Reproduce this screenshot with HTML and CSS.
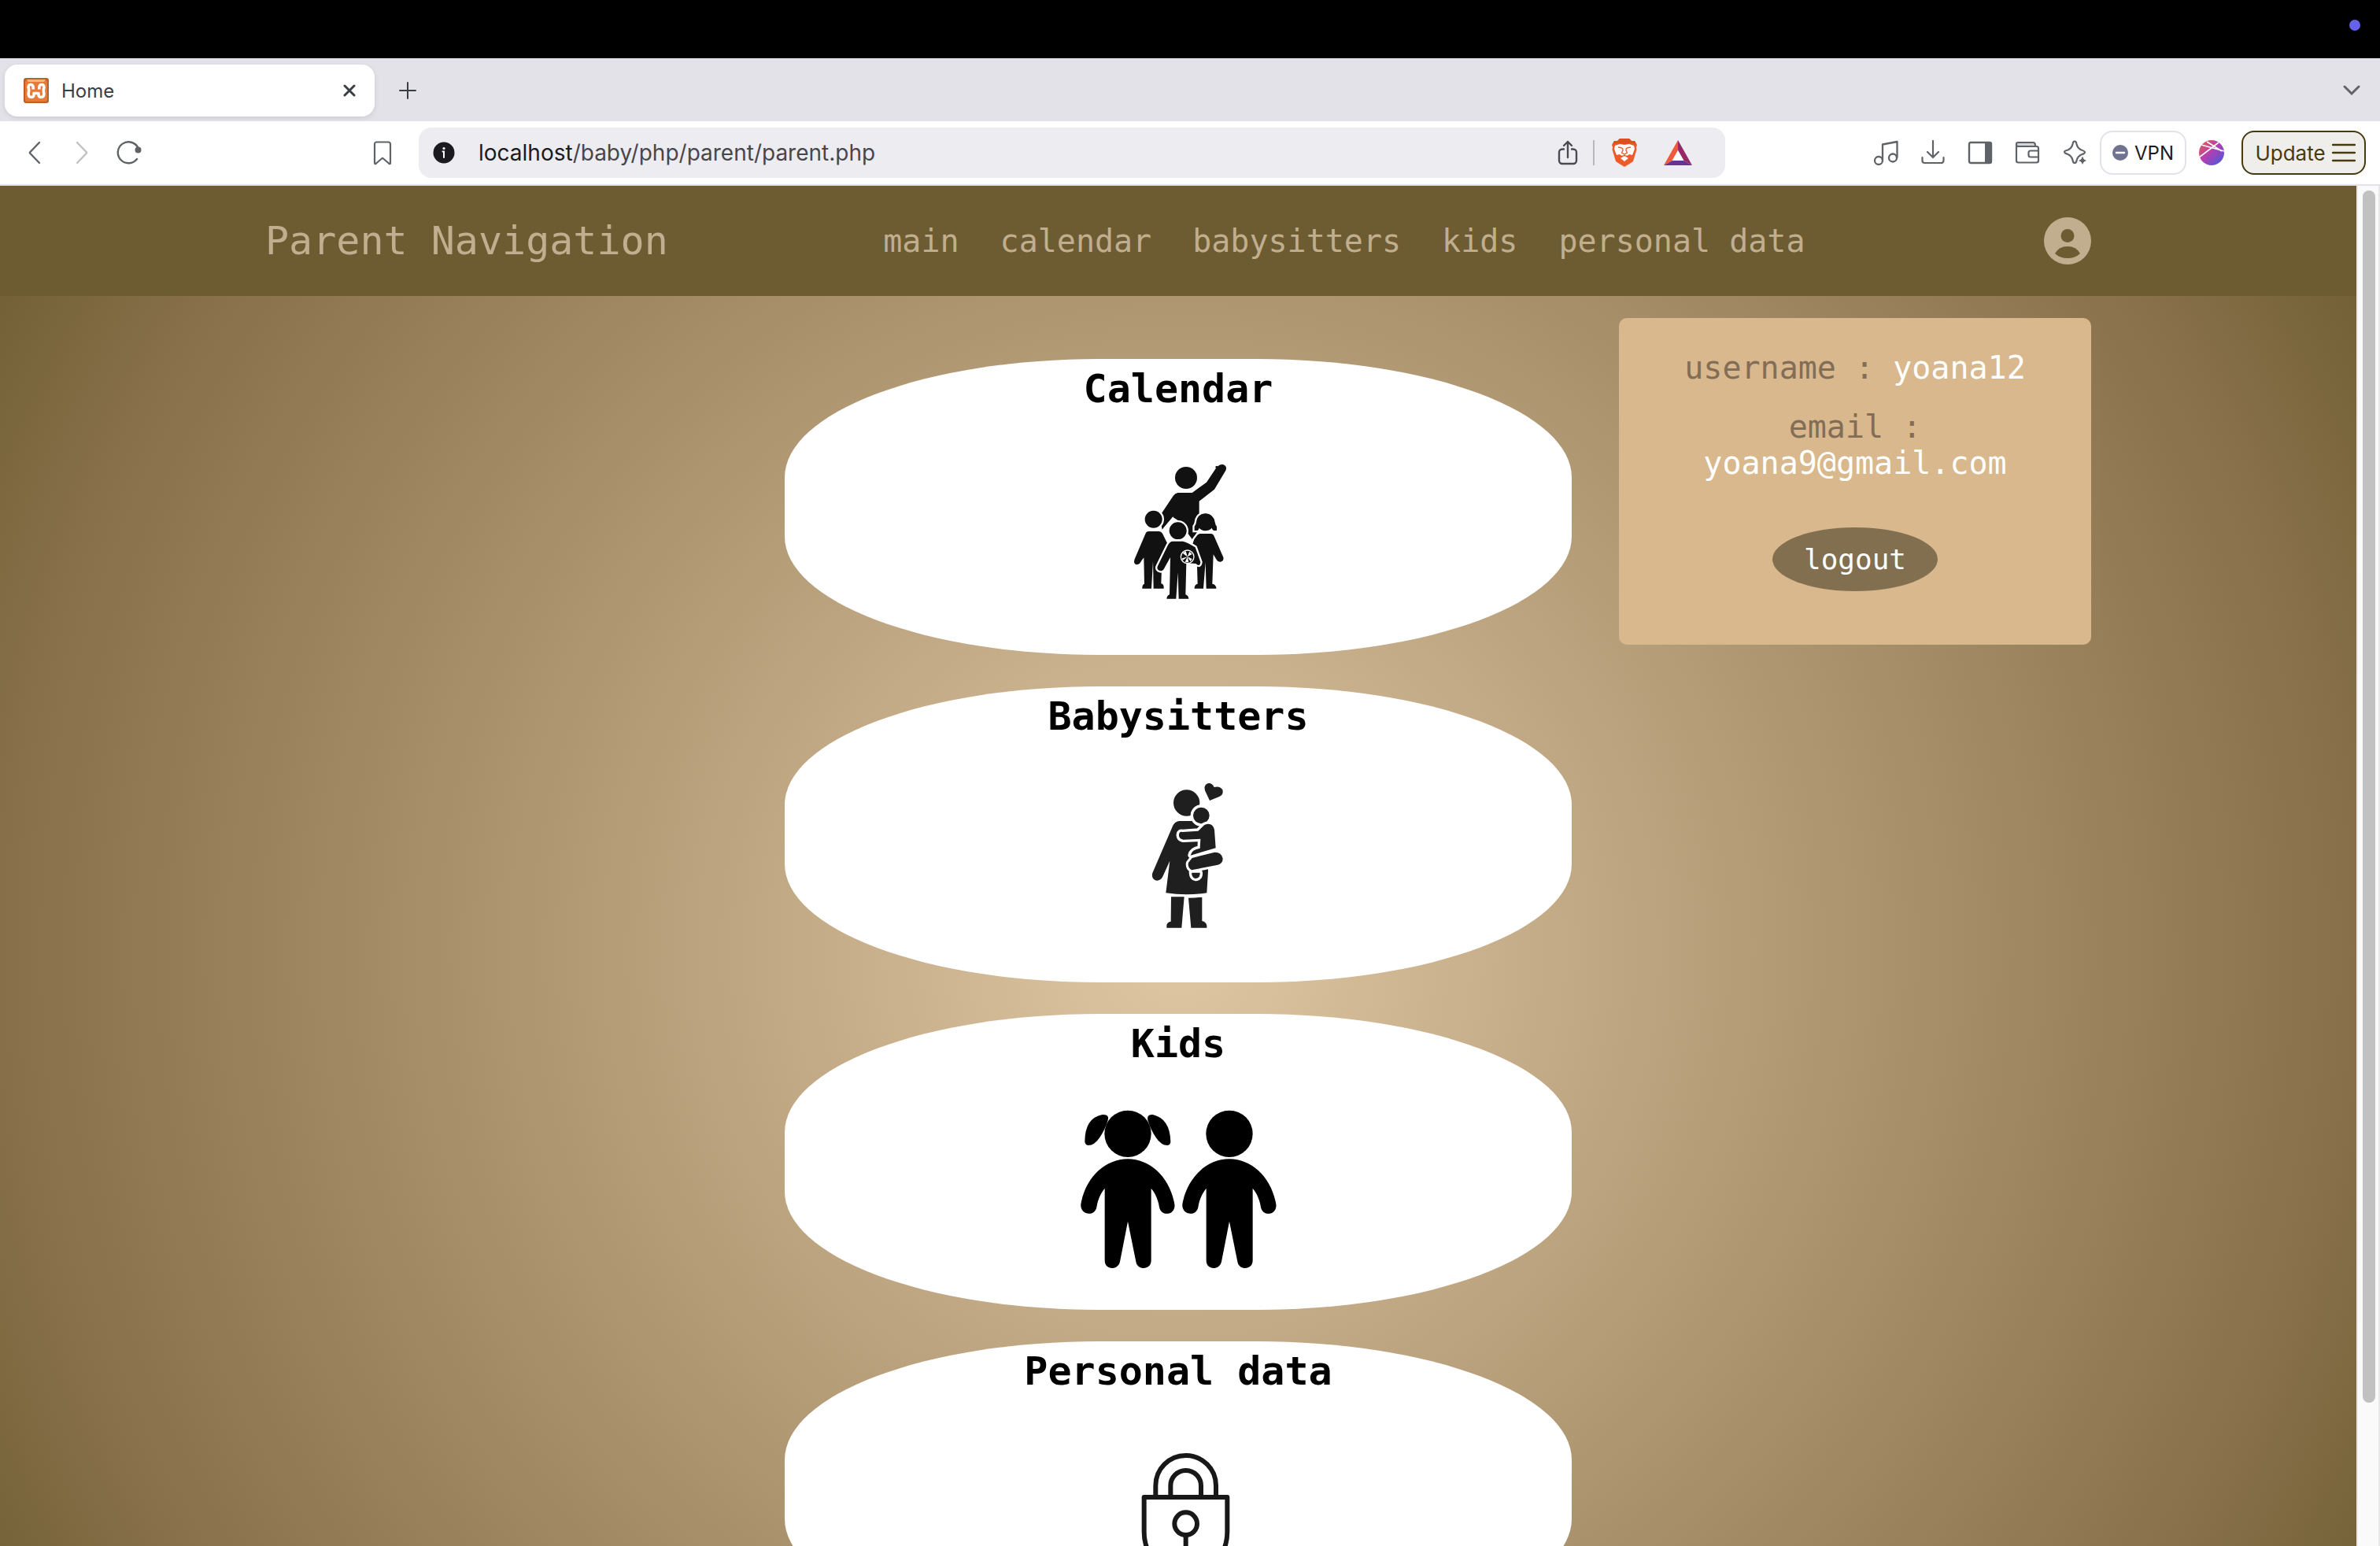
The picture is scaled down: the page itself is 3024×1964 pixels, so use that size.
FILE: index.html
```html
<!DOCTYPE html>
<html lang="en">
<head>
<meta charset="utf-8">
<title>Home</title>
<link rel="stylesheet" href="styles.css">
</head>
<body>
<div class="screen">
  <div class="menubar"><span class="status-dot"></span></div>

  <div class="tabstrip">
    <div class="tab">
      <svg class="icon" viewBox="0 0 32 32"><rect width="32" height="32" rx="3" fill="#b9602b"/><rect x="2" y="3" width="28" height="27" rx="2" fill="#e87a38"/><path d="M4 2h24l-2 3H6z" fill="#efb48c"/><path d="M12 14.500q1-6-3-6t-2.500 5.500q.500 2 0 3.500-1.500 7 3.500 7 3.500 0 3-5h6q-.500 5 3 5 5 0 3.500-7-.500-1.500 0-3.500 1.500-5.500-2.500-5.500t-3 6" fill="none" stroke="#fff" stroke-width="3.600" stroke-linejoin="round"/></svg>
      <span class="tab-title">Home</span>
      <button class="tab-close" aria-label="Close tab"><svg viewBox="0 0 16 16" width="16" height="16"><path d="M2 2l12 12M14 2L2 14" stroke="#3b3e43" stroke-width="3" stroke-linecap="round"/></svg></button>
    </div>
    <button class="tab-new" aria-label="New tab"><svg viewBox="0 0 22 22" width="22" height="22"><path d="M11 1v20M1 11h20" stroke="#3b3e43" stroke-width="2" stroke-linecap="round"/></svg></button>
    <button class="tab-list" aria-label="Search tabs"><svg viewBox="0 0 22 14" width="22" height="14"><path d="M2 2l9 9 9-9" fill="none" stroke="#606367" stroke-width="3" stroke-linecap="round"/></svg></button>
  </div>

  <div class="toolbar">
    <button aria-label="Back"><svg class="icon" viewBox="0 0 32 32"><path d="M22 3L10 15.500Q9.500 16 10 16.500L22 29" fill="none" stroke="#5f6368" stroke-width="2.400" stroke-linecap="round"/></svg></button>
    <button aria-label="Forward"><svg class="icon" viewBox="0 0 32 32"><path d="M10 3L22 15.500Q22.500 16 22 16.500L10 29" fill="none" stroke="#bfc1c3" stroke-width="2.400" stroke-linecap="round"/></svg></button>
    <button aria-label="Reload"><svg class="icon" viewBox="0 0 32 32"><path d="M26 24A13.500 13.500 0 1 1 27.500 10" fill="none" stroke="#5f6368" stroke-width="2.400" stroke-linecap="round"/><circle cx="27.500" cy="12.500" r="4" fill="#5f6368"/></svg></button>
    <button class="bookmark" aria-label="Bookmark"><svg class="icon" viewBox="0 0 32 32"><path d="M8.500 2.500h15a2.500 2.500 0 0 1 2.500 2.500v24q0 2-2 .500l-7-6q-1-1-2 0l-7 6q-2 1.500-2-.500V5a2.500 2.500 0 0 1 2.500-2.500z" fill="none" stroke="#5f6368" stroke-width="2.200"/></svg></button>
    <div class="omnibox">
      <svg class="site-info" viewBox="0 0 28 28"><circle cx="14" cy="14" r="13.500" fill="#1b1a1f"/><circle cx="14" cy="8.500" r="1.600" fill="#fff"/><path d="M12.500 12.500H14V20" fill="none" stroke="#fff" stroke-width="2" stroke-linecap="round"/></svg>
      <span class="url"><span class="host">localhost</span>/baby/php/parent/parent.php</span>
      <svg class="icon" viewBox="0 0 32 32"><path d="M11 11.500H9A4 4 0 0 0 5 15.500V26a4 4 0 0 0 4 4h14a4 4 0 0 0 4-4V15.500A4 4 0 0 0 23 11.500H21M16 22V2M11 7l5-5 5 5" fill="none" stroke="#4a4a50" stroke-width="2.400" stroke-linecap="round" stroke-linejoin="round"/></svg>
      <span class="omni-divider"></span>
      <svg class="brave" viewBox="0 0 32 36"><path d="M10 0h12l3 3 4 0 3 5-1 3 .500 3-4.500 15-6 4-5 3-5-3-6-4L.500 14 1 11 0 8l3-5 4 0z" fill="#ee5b2a"/><path d="M10 0h12l3 3 4 0 2 4-7-1-8 1-8-1-7 1 2-4 4 0z" fill="#de4f20"/><path d="M4 9l6-2 6 1 6-1 6 2 1 4-3 8-4-1-4 3h-4l-4-3-4 1-3-8z" fill="#fff"/><path d="M16 22l5 3-5 4-5-4z" fill="#fff"/><path d="M8 11l5 1M24 11l-5 1M13.500 12l.500 3-1.500 3 3.500 2 3.500-2-1.500-3 .500-3M16 20v2.500M11 23l5-1.500 5 1.500" fill="none" stroke="#ee5b2a" stroke-width="1.400"/></svg>
      <svg class="bat" viewBox="0 0 36 32"><path d="M18 0L0 32l11-6 7-13z" fill="#f15a38"/><path d="M18 0l18 32-11-6-7-13z" fill="#942965"/><path d="M0 32h36l-11-6H11z" fill="#653394"/><path d="M18 13l7.500 13h-15z" fill="#fff"/></svg>
    </div>
    <div class="tools">
      <button aria-label="Media"><svg class="icon" viewBox="0 0 32 32"><g fill="none" stroke="#5f6368" stroke-width="2.300"><circle cx="7" cy="26" r="5"/><circle cx="25" cy="22.500" r="5"/><path d="M12 26V5.500L30.500 2v20.500" stroke-linejoin="round"/></g></svg></button>
      <button aria-label="Downloads"><svg class="icon" viewBox="0 0 32 32"><path d="M16 1v20M9 15l7 7 7-7M2.500 22v4a3 3 0 0 0 3 3h21a3 3 0 0 0 3-3v-4" fill="none" stroke="#5f6368" stroke-width="2.200" stroke-linecap="round"/></svg></button>
      <button aria-label="Sidebar"><svg class="icon" viewBox="0 0 32 32"><rect x="2" y="3" width="28" height="26" rx="2" fill="none" stroke="#5f6368" stroke-width="2.400"/><path d="M22 3h8v26h-8z" fill="#5f6368"/></svg></button>
      <button aria-label="Wallet"><svg class="icon" viewBox="0 0 32 32"><path d="M3 4h20q3 0 3 4H3z" fill="#d5d6d8"/><path d="M2 5q0-2 2-2h19q3 0 3 4M2 5v21q0 2.500 2.500 2.500h23q2.500 0 2.500-2.500V10.500Q30 8 27.500 8H4.500Q2 8 2 6M30 13.500H20q-2.500 0-2.500 2.500v3q0 2.500 2.500 2.500h10" fill="none" stroke="#5f6368" stroke-width="2.200"/></svg></button>
      <button aria-label="Leo"><svg class="icon" viewBox="0 0 32 32"><path d="M16 1.500q2 0 2.500 3.500 1 5 6 7.500 4.500 1.500 4.500 3t-4.500 3q-5 2.500-6 7.500Q18 29 16 29t-2.500-3.500q-1-5-6-7.500Q3 16.500 3 15t4.500-2.500q5-2.500 6-7.500 .500-3.500 2.500-3.500z" fill="none" stroke="#5f6368" stroke-width="2.200"/><path d="M26 19l2 5 4 2-4 2-2 4-2-4-4-2 4-2z" fill="#5f6368" stroke="#fff" stroke-width="1"/></svg></button>
    </div>
    <button class="vpn"><svg viewBox="0 0 20 20" width="20" height="20"><circle cx="10" cy="10" r="10" fill="#70738f"/><path d="M5 10h10" stroke="#fff" stroke-width="2.500" stroke-linecap="round"/></svg>VPN</button>
    <button class="profile" aria-label="Profile"><svg class="icon" viewBox="0 0 32 32"><defs><linearGradient id="ball" x1="0" y1="0" x2="1" y2="1"><stop offset="0" stop-color="#f06040"/><stop offset=".450" stop-color="#b63fb0"/><stop offset="1" stop-color="#3f5be0"/></linearGradient><clipPath id="round"><circle cx="16" cy="16" r="16"/></clipPath></defs><circle cx="16" cy="16" r="16" fill="url(#ball)"/><path clip-path="url(#round)" d="M0 22L25 3M3 6l29 8M10 2l19 12" stroke="#fff" stroke-width="1.600"/></svg></button>
    <button class="update">Update<svg viewBox="0 0 30 24" width="30" height="24"><path d="M1 2h28M1 12h28M1 22h28" stroke="#473a0e" stroke-width="2.400" stroke-linecap="round"/></svg></button>
  </div>

  <div class="viewport">
    <div class="page">
      <header class="site-header">
        <div class="site-nav">
          <span class="brand">Parent Navigation</span>
          <nav class="links">
            <a href="#main">main</a>
            <a href="#calendar">calendar</a>
            <a href="#babysitters">babysitters</a>
            <a href="#kids">kids</a>
            <a href="#personal">personal data</a>
          </nav>
          <button class="account" aria-label="Account"><svg viewBox="0 0 60 60" width="60" height="60"><circle cx="30" cy="30" r="30" fill="#c0ae8f"/><circle cx="30" cy="23.500" r="8.500" fill="#6d5c31"/><path d="M14 46q5-9 16-9t16 9q-6 6-16 6t-16-6z" fill="#6d5c31"/></svg></button>
          <section class="account-panel">
            <p>username : <span>yoana12</span></p>
            <p>email : <span>yoana9@gmail.com</span></p>
            <button class="logout">logout</button>
          </section>
        </div>
      </header>

      <main class="cards">
        <a class="card" href="#calendar">
          <h2>Calendar</h2>
          <svg viewBox="-159 -12 900 720" fill="#111">
            <circle cx="321" cy="141" r="42"/>
            <path d="M290 198h54l55-40 36-54q-4-4 0-8l7 1q14-12 26-4 10 8 4 20l-43 72-58 45v90l-20 64-60-80-21-14-40 48-10-50 52-78q7-10 18-12z"/>
            <path d="M273 288l-38 44 30-2z" fill="#fff"/>
            <g stroke="#fff" stroke-width="14" paint-order="stroke">
              <circle cx="197" cy="299" r="33"/>
              <path d="M395 278q31 0 36 32 2 12 7 16v16h-12q-6-4-7-10l-48 0q-1 6-6 10h-12v-16q6-6 7-16 3-32 35-32z"/>
              <path d="M178 345h40q8 0 13 8l39 80q6 18-10 24-12 4-20-8l-10-20-4 115q10 2 10 14v5h-39l-2-105-6 105h-35v-5q2-12 8-13l-2-100-9 12q-8 18-22 14-10-6-4-20l41-96q4-10 12-10z" stroke="none"/>
              <path d="M375 354h40q9 0 13 10l35 80q3 14-10 17-10 2-16-8l-12-20-4 112q12 2 15 14v4h-38l-3-100-8 100h-34v-4q2-12 12-14l-3-100-30-10 20-60 12-16q5-5 11-5z"/>
              <circle cx="290" cy="343" r="33"/>
              <path d="M270 383h38q15 2 48 23l20 56q-2 20-18 6l-36-2-3 120q11 4 12 16h-38l-3-100-7 100h-36q1-12 11-16l3-142-22 40q-8 18-23 9-8-6-3-16l38-78q8-16 20-16z"/>
            </g>
            <circle cx="395" cy="310" r="33"/>
            <circle cx="326" cy="442" r="25" stroke="#fff" stroke-width="4"/>
            <path d="M326 442l-18-14 12-8zM326 442l8-20 10 10zM326 442l18 8-6 10zM326 442l5 21h-14zM326 442l-20 6 2 8z" fill="#fff"/>
          </svg>
        </a>
        <a class="card" href="#babysitters">
          <h2>Babysitters</h2>
          <svg viewBox="-219 -24 900 720" fill="#1f1f1f">
            <circle cx="263" cy="120" r="50"/>
            <path d="M351 111l-18-38q-6-20 10-27 16-4 25 14 22-6 32 10 6 18-14 27z"/>
            <path d="M235 189h50l60 20 0 170-5 84q-78 12-156 0l15-122-28 62q-12 18-29 11-14-8-9-27l75-174q8-22 27-24z"/>
            <path d="M204 478h50l-10 118h-57v-10q2-12 16-14zM270 482q26 0 52-3v91q16 4 18 18v8h-60z"/>
            <g stroke="#fff" stroke-width="20" paint-order="stroke" stroke-linejoin="round">
              <path d="M282 386h32q2 18-16 22-15-2-16-22z"/>
              <circle cx="319" cy="168" r="31"/>
              <path d="M331 204q30-12 38 18l5 70-96 28q4-22 36-27l2-36-66 3q-18-4-16-20 2-12 13-9l60-4z"/>
            </g>
            <path d="M284 330l86-22q27 0 31 24 0 18-19 24l-100 20q-16-10-12-28z" stroke="#fff" stroke-width="18" paint-order="stroke" stroke-linejoin="round"/>
          </svg>
        </a>
        <a class="card" href="#kids">
          <h2>Kids</h2>
          <svg viewBox="-9 -6 900 720">
            <defs><g id="child"><circle cx="249" cy="151" r="89"/><path d="M249 247c85 0 160 70 178 172 6 42-50 50-58 12q-7-44-31-72v275c0 38-53 38-58 4L249 485l-30 153c-7 34-58 34-58-4V359q-24 28-31 72c-8 38-64 30-60-12C88 317 163 247 249 247z"/></g></defs>
            <use href="#child"/>
            <use href="#child" x="387"/>
            <path d="M152 78q28-2 21 22-10 34-31 65-20 30-44 30-12-2-13-14 0-90 67-103zM344 78q-24-2-19 22 10 34 31 65 20 30 44 30 12-2 12-14-2-88-68-103z"/>
          </svg>
        </a>
        <a class="card" href="#personal">
          <h2>Personal data</h2>
          <svg viewBox="-159 -48 900 720" fill="none" stroke="#181818" stroke-width="18">
            <path d="M205 240v-38a115 115 0 0 1 230 0v38M262 240v-38a58 58 0 0 1 116 0v38M161 246h317v132q0 130-158 166-159-36-159-166z" stroke-linejoin="round"/>
            <circle cx="320" cy="347" r="43"/><path d="M320 390v70"/>
          </svg>
        </a>
      </main>
    </div>
    <div class="scrollbar"><div class="thumb"></div></div>
  </div>
</div>
</body>
</html>
```
FILE: styles.css
```css
* { box-sizing: border-box; }
body { margin: 0; font-family: Inter, sans-serif; }
button { padding: 0; border: 0; background: none; font: inherit; color: inherit; display: flex; align-items: center; }
a { color: inherit; text-decoration: none; }
svg { display: block; flex: none; }
.icon { width: 32px; height: 32px; }

.screen { height: 100vh; display: flex; flex-direction: column; overflow: hidden; }

.menubar { flex: none; height: 74px; background: #000; display: flex; justify-content: flex-end; align-items: flex-start; padding: 25px; }
.status-dot { width: 14px; height: 14px; border-radius: 50%; background: #6561ea; }

.tabstrip { flex: none; height: 80px; background: #e3e2e8; display: flex; align-items: center; padding: 2px 25px 0 6px; }
.tab { width: 470px; height: 66px; border-radius: 16px; background: #fff; box-shadow: 0 2px 6px #0000001a; display: flex; align-items: center; padding: 0 24px; }
.tab-title { flex: 1; padding-left: 16px; font-size: 24px; color: #3b3e43; }
.tab-new { margin-left: 31px; }
.tab-list { margin-left: auto; }

.toolbar { flex: none; height: 82px; background: #fff; border-bottom: 2px solid #e3e2e8; display: flex; align-items: center; padding: 0 18px 0 28px; }
.toolbar > button + button { margin-left: 28px; }
.toolbar > .bookmark.bookmark { margin-left: 290px; }
.omnibox { flex: 1; height: 64px; margin: 0 188px 0 30px; border-radius: 16px; background: #edecf1; display: flex; align-items: center; padding: 0 42px 0 18px; }
.site-info { width: 28px; height: 28px; }
.url { flex: 1; padding-left: 30px; font-size: 28px; color: #47464b; }
.host { color: #1b1a1f; }
.omni-divider { width: 2px; height: 32px; margin: 0 22px 0 16px; background: #b9b8bd; }
.brave { width: 32px; height: 36px; }
.bat { width: 36px; height: 32px; margin-left: 34px; }
.tools { display: flex; gap: 28px; }
.toolbar > .vpn { width: 110px; height: 56px; margin-left: 16px; border: 2px solid #e3e2e8; border-radius: 16px; justify-content: center; gap: 8px; font-size: 24px; color: #1b1a1f; }
.toolbar > .profile.profile { margin-left: 16px; }
.toolbar > .update.update { width: 158px; height: 56px; margin-left: 22px; padding-left: 4px; border: 2px solid #473a0e; border-radius: 16px; background: #f0eeea; justify-content: center; gap: 8px; font-size: 26px; color: #473a0e; }

.viewport { flex: 1; min-height: 0; display: flex; align-items: flex-start; overflow: hidden; }
.page { flex: 1; padding-bottom: 96px; background: radial-gradient(circle, #e0c7a4, #866f49 84%, #6d5c31); font-family: "DejaVu Sans Mono", monospace; }
.scrollbar { width: 30px; height: 100%; padding: 6px; border: 2px solid #e8e8e8; border-width: 0 2px; background: #fafafa; }
.thumb { width: 16px; height: calc(90% - 4px); border-radius: 8px; background: #c1c1c1; }

.site-header { background: #6d5c31; color: #c0ae8f; }
.site-nav { position: relative; height: 140px; max-width: 2320px; margin: 0 auto; display: flex; align-items: center; justify-content: space-between; }
.brand { font-size: 50px; }
.links { display: flex; gap: 52px; font-size: 40px; }
.account { padding-left: 30px; }

.account-panel { position: absolute; top: 168px; right: 0; width: 600px; padding: 40px 40px 68px; border-radius: 10px; background: #d8b88c; color: #826d56; font-size: 40px; text-align: center; }
.account-panel p { margin: 0 0 29px; }
.account-panel span { color: #fff; }
.logout { margin: 59px auto 0; padding: 20px 40px; border-radius: 50%; background: #826f4f; color: #fff; font-size: 36px; }

.cards { max-width: 1000px; margin: 80px auto 0; display: grid; gap: 40px; }
.card { padding: 8px 0 36px; border-radius: 40%; background: #fff; color: #000; display: flex; flex-direction: column; align-items: center; }
.card h2 { margin: 0 0 32px; font-size: 50px; line-height: 60px; }
.card svg { width: 300px; height: 240px; }
```
